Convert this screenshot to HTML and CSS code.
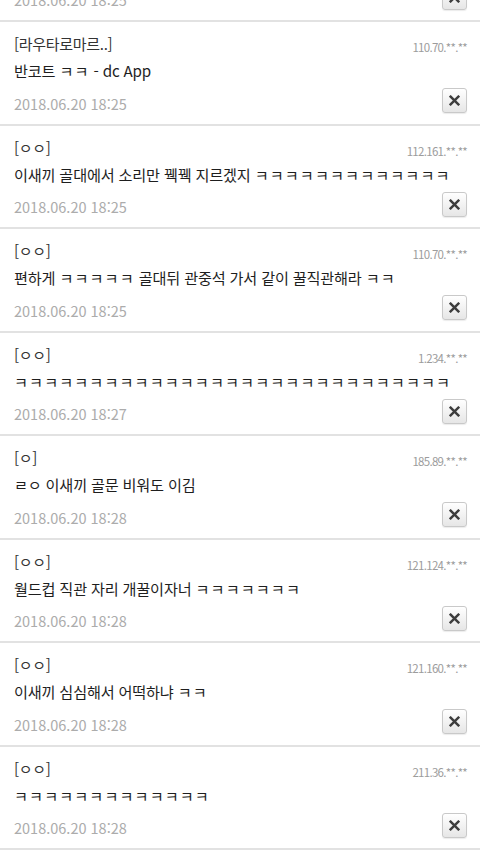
FILE: index.html
```html
<!DOCTYPE html>
<html lang="ko">
<head>
    <meta charset="UTF-8">
    <meta name="viewport" content="width=device-width, initial-scale=1.0">
    <title>댓글</title>
    <link rel="stylesheet" href="styles.css">
</head>
<body>
    <ul class="comment-list">
        <li class="comment">
            <div class="comment-head">
                <span class="nick">[ㅇㅇ]</span>
                <span class="ip">110.70.**.**</span>
            </div>
            <p class="comment-text"><span class="kk">ㅋㅋㅋ</span></p>
            <div class="comment-foot">
                <span class="date">2018.06.20 18:25</span>
                <button class="del-btn" type="button" aria-label="삭제"><svg viewBox="0 0 10 10"><path d="M1.5 1.5 L8.5 8.5 M8.5 1.5 L1.5 8.5"/></svg></button>
            </div>
        </li>
        <li class="comment">
            <div class="comment-head">
                <span class="nick">[라우타로마르..]</span>
                <span class="ip">110.70.**.**</span>
            </div>
            <p class="comment-text">반코트 <span class="kk">ㅋㅋ</span> - dc App</p>
            <div class="comment-foot">
                <span class="date">2018.06.20 18:25</span>
                <button class="del-btn" type="button" aria-label="삭제"><svg viewBox="0 0 10 10"><path d="M1.5 1.5 L8.5 8.5 M8.5 1.5 L1.5 8.5"/></svg></button>
            </div>
        </li>
        <li class="comment">
            <div class="comment-head">
                <span class="nick">[ㅇㅇ]</span>
                <span class="ip">112.161.**.**</span>
            </div>
            <p class="comment-text">이새끼 골대에서 소리만 꿱꿱 지르겠지 <span class="kk">ㅋㅋㅋㅋㅋㅋㅋㅋㅋㅋㅋㅋㅋ</span></p>
            <div class="comment-foot">
                <span class="date">2018.06.20 18:25</span>
                <button class="del-btn" type="button" aria-label="삭제"><svg viewBox="0 0 10 10"><path d="M1.5 1.5 L8.5 8.5 M8.5 1.5 L1.5 8.5"/></svg></button>
            </div>
        </li>
        <li class="comment">
            <div class="comment-head">
                <span class="nick">[ㅇㅇ]</span>
                <span class="ip">110.70.**.**</span>
            </div>
            <p class="comment-text">편하게 <span class="kk">ㅋㅋㅋㅋㅋ</span> 골대뒤 관중석 가서 같이 꿀직관해라 <span class="kk">ㅋㅋ</span></p>
            <div class="comment-foot">
                <span class="date">2018.06.20 18:25</span>
                <button class="del-btn" type="button" aria-label="삭제"><svg viewBox="0 0 10 10"><path d="M1.5 1.5 L8.5 8.5 M8.5 1.5 L1.5 8.5"/></svg></button>
            </div>
        </li>
        <li class="comment">
            <div class="comment-head">
                <span class="nick">[ㅇㅇ]</span>
                <span class="ip">1.234.**.**</span>
            </div>
            <p class="comment-text"><span class="kk">ㅋㅋㅋㅋㅋㅋㅋㅋㅋㅋㅋㅋㅋㅋㅋㅋㅋㅋㅋㅋㅋㅋㅋㅋㅋㅋㅋㅋㅋ</span></p>
            <div class="comment-foot">
                <span class="date">2018.06.20 18:27</span>
                <button class="del-btn" type="button" aria-label="삭제"><svg viewBox="0 0 10 10"><path d="M1.5 1.5 L8.5 8.5 M8.5 1.5 L1.5 8.5"/></svg></button>
            </div>
        </li>
        <li class="comment">
            <div class="comment-head">
                <span class="nick">[ㅇ]</span>
                <span class="ip">185.89.**.**</span>
            </div>
            <p class="comment-text">ㄹㅇ 이새끼 골문 비워도 이김</p>
            <div class="comment-foot">
                <span class="date">2018.06.20 18:28</span>
                <button class="del-btn" type="button" aria-label="삭제"><svg viewBox="0 0 10 10"><path d="M1.5 1.5 L8.5 8.5 M8.5 1.5 L1.5 8.5"/></svg></button>
            </div>
        </li>
        <li class="comment">
            <div class="comment-head">
                <span class="nick">[ㅇㅇ]</span>
                <span class="ip">121.124.**.**</span>
            </div>
            <p class="comment-text">월드컵 직관 자리 개꿀이자너 <span class="kk">ㅋㅋㅋㅋㅋㅋㅋ</span></p>
            <div class="comment-foot">
                <span class="date">2018.06.20 18:28</span>
                <button class="del-btn" type="button" aria-label="삭제"><svg viewBox="0 0 10 10"><path d="M1.5 1.5 L8.5 8.5 M8.5 1.5 L1.5 8.5"/></svg></button>
            </div>
        </li>
        <li class="comment">
            <div class="comment-head">
                <span class="nick">[ㅇㅇ]</span>
                <span class="ip">121.160.**.**</span>
            </div>
            <p class="comment-text">이새끼 심심해서 어떡하냐 <span class="kk">ㅋㅋ</span></p>
            <div class="comment-foot">
                <span class="date">2018.06.20 18:28</span>
                <button class="del-btn" type="button" aria-label="삭제"><svg viewBox="0 0 10 10"><path d="M1.5 1.5 L8.5 8.5 M8.5 1.5 L1.5 8.5"/></svg></button>
            </div>
        </li>
        <li class="comment">
            <div class="comment-head">
                <span class="nick">[ㅇㅇ]</span>
                <span class="ip">211.36.**.**</span>
            </div>
            <p class="comment-text"><span class="kk">ㅋㅋㅋㅋㅋㅋㅋㅋㅋㅋㅋㅋㅋ</span></p>
            <div class="comment-foot">
                <span class="date">2018.06.20 18:28</span>
                <button class="del-btn" type="button" aria-label="삭제"><svg viewBox="0 0 10 10"><path d="M1.5 1.5 L8.5 8.5 M8.5 1.5 L1.5 8.5"/></svg></button>
            </div>
        </li>
    </ul>
</body>
</html>
```

FILE: styles.css
```css
body {
    margin: 0;
    background-color: #fff;
    font-family: "Noto Sans CJK KR", "Noto Sans", sans-serif;
    overflow: hidden;
}

/* list is scrolled: the first comment sits mostly above the window */
.comment-list {
    list-style: none;
    margin: -81.5px 0 0;
    padding: 0;
}

.comment {
    height: 89.5px;
    padding: 12px 13px 0 14px;
    border-bottom: 2px solid #e2e2e2;
}

.comment-head {
    display: flex;
    justify-content: space-between;
    align-items: baseline;
    height: 20px;
    line-height: 20px;
}

.nick {
    font-size: 15px;
    color: #333;
    letter-spacing: -0.3px;
}

.ip {
    font-size: 11.5px;
    color: #9c9c9c;
    letter-spacing: -0.7px;
    position: relative;
    top: 2px;
}

.comment-text {
    margin: 4px 0 0;
    font-size: 15.2px;
    line-height: 25px;
    color: #1e1e1e;
    white-space: nowrap;
    letter-spacing: -0.2px;
}

/* the jamo runs are set wider than the syllables */
.comment-text .kk {
    letter-spacing: 1.1px;
}

.comment-foot {
    display: flex;
    justify-content: space-between;
    align-items: center;
    height: 25px;
    margin-top: 5px;
}

.date {
    font-size: 14.5px;
    color: #acacac;
    padding-top: 5px;
}

.del-btn {
    width: 25px;
    height: 25px;
    padding: 0;
    border: 1px solid #c9c9c9;
    border-radius: 3px;
    background: linear-gradient(#ffffff, #e6e6e6);
    box-shadow: 0 1px 1px rgba(0, 0, 0, 0.08);
    display: flex;
    align-items: center;
    justify-content: center;
}

.del-btn svg {
    width: 11px;
    height: 11px;
}

.del-btn path {
    fill: none;
    stroke: #3d3d3d;
    stroke-width: 2.2;
    stroke-linecap: square;
}
```
